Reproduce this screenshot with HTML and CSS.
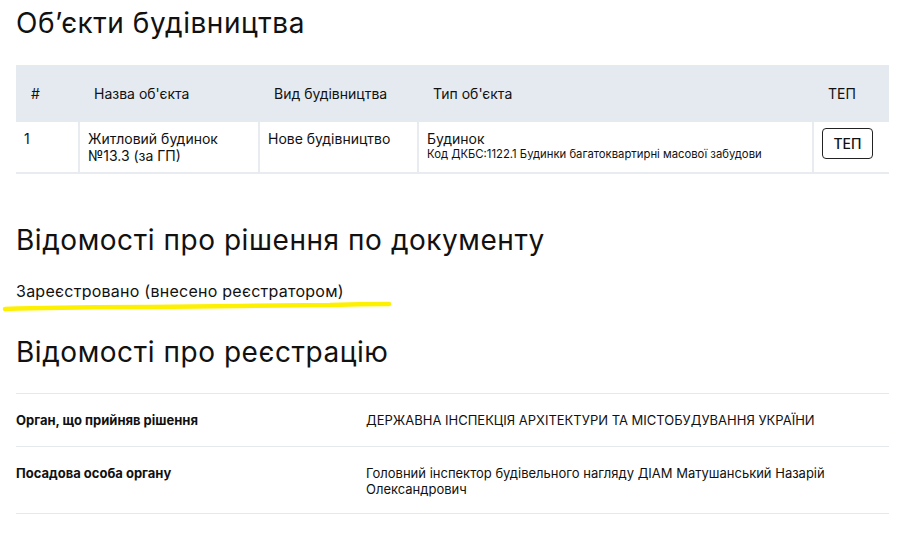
FILE: index.html
```html
<!DOCTYPE html>
<html lang="uk">
<head>
  <meta charset="UTF-8">
  <title>Об’єкти будівництва</title>
  <link rel="stylesheet" href="styles.css">
</head>
<body>

  <h2 class="section-title first">Об’єкти будівництва</h2>

  <table class="objects">
    <thead>
      <tr>
        <th class="col-num">#</th>
        <th class="col-name">Назва об'єкта</th>
        <th class="col-kind">Вид будівництва</th>
        <th class="col-type">Тип об'єкта</th>
        <th class="col-tep">ТЕП</th>
      </tr>
    </thead>
    <tbody>
      <tr>
        <td>1</td>
        <td>Житловий будинок<br>№13.3 (за ГП)</td>
        <td>Нове будівництво</td>
        <td>
          Будинок
          <div class="code">Код ДКБС:1122.1 Будинки багатоквартирні масової забудови</div>
        </td>
        <td class="tep-cell"><button class="tep-btn">ТЕП</button></td>
      </tr>
    </tbody>
  </table>

  <h2 class="section-title second">Відомості про рішення по документу</h2>
  <div class="decision">
    Зареєстровано (внесено реєстратором)
    <svg class="marker" width="400" height="16" viewBox="0 0 400 16">
      <path d="M5 12 C 40 11, 60 10, 150 10 C 220 9, 260 9, 330 8 C 360 7, 375 7, 389 7" fill="none" stroke="#fdf000" stroke-width="4.5" stroke-linecap="round"/>
    </svg>
  </div>

  <h2 class="section-title third">Відомості про реєстрацію</h2>
  <div class="details">
    <div class="detail-row">
      <div class="detail-label">Орган, що прийняв рішення</div>
      <div class="detail-value">ДЕРЖАВНА ІНСПЕКЦІЯ АРХІТЕКТУРИ ТА МІСТОБУДУВАННЯ УКРАЇНИ</div>
    </div>
    <div class="detail-row">
      <div class="detail-label">Посадова особа органу</div>
      <div class="detail-value">Головний інспектор будівельного нагляду ДІАМ Матушанський Назарій<br>Олександрович</div>
    </div>
  </div>

</body>
</html>
```

FILE: styles.css
```css
body {
  font-family: Inter, "Noto Sans", sans-serif;
  color: #111;
  background: #fff;
  margin: 0;
  padding: 0 13px 0 16px;
}

.section-title {
  font-size: 28px;
  font-weight: 400;
  line-height: 34px;
  margin: 0;
  letter-spacing: 0.55px;
}

.section-title.first {
  margin-top: 6px;
  margin-bottom: 25px;
}

.section-title.second {
  margin-top: 49px;
}

.section-title.third {
  margin-top: 34px;
}

.objects {
  width: 100%;
  border-collapse: collapse;
  font-size: 14px;
  line-height: 17px;
}

.objects th {
  background: #e4eaf0;
  font-weight: 400;
  text-align: left;
  height: 57px;
  padding: 0 15px;
}

.objects th.col-num {
  width: 63px;
  padding-left: 15px;
  box-sizing: border-box;
}

.objects th.col-name {
  width: 180px;
  box-sizing: border-box;
}

.objects th.col-kind {
  width: 159px;
  box-sizing: border-box;
}

.objects th.col-tep {
  width: 76px;
  box-sizing: border-box;
}

.objects td {
  vertical-align: top;
  padding: 8px 8px;
  border: 2px solid #e8ecf0;
  border-top: none;
  height: 34px;
}

.objects td:first-child {
  border-left: none;
}

.objects td:last-child {
  border-right: none;
}

.objects .code {
  font-size: 11.3px;
  line-height: 15px;
}

.tep-btn {
  font-family: inherit;
  font-size: 14px;
  font-weight: 500;
  color: #111;
  background: #fff;
  border: 1px solid #222;
  border-radius: 4px;
  width: 51px;
  height: 31px;
  margin-top: -2px;
  cursor: pointer;
}

.decision {
  position: relative;
  font-size: 16px;
  line-height: 20px;
  letter-spacing: 0.25px;
  margin-top: 24px;
}

.marker {
  position: absolute;
  left: -16px;
  top: 16px;
}

.details {
  margin-top: 24px;
  font-size: 13px;
  line-height: 16px;
}

.detail-row {
  display: flex;
  border-top: 1px solid #e6e9ec;
  padding: 18px 0;
}

.detail-row:last-child {
  padding-bottom: 16px;
  border-bottom: 1px solid #e6e9ec;
}

.detail-label {
  width: 350px;
  font-weight: 700;
}
```
